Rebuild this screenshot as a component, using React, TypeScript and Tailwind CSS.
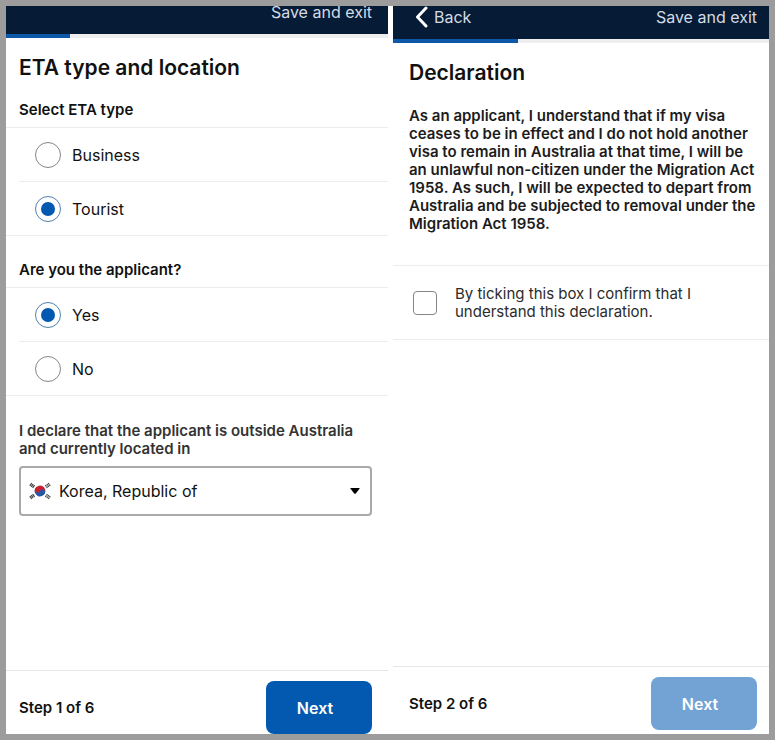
import { ReactNode, useState } from 'react';

interface ScreenProps {
  step: number;
  header: ReactNode;
  children: ReactNode;
  footerClass: string;
  nextDisabled?: boolean;
}

const TOTAL_STEPS = 6;

function Screen({ step, header, children, footerClass, nextDisabled = false }: ScreenProps) {
  return (
    <section className="flex min-w-0 flex-col bg-white">
      {header}
      <div className="h-1 bg-[#eeeef0]">
        <div className="h-full bg-[#0d58a8]" style={{ width: `${(step / TOTAL_STEPS) * 100}%` }} />
      </div>
      <main className="flex-1">{children}</main>
      <footer className={`flex items-center justify-between border-t border-[#e4e7e8] pt-2.5 ${footerClass}`}>
        <span className="text-[15px] leading-5 font-semibold">
          Step {step} of {TOTAL_STEPS}
        </span>
        <button
          type="button"
          disabled={nextDisabled}
          className="h-[53px] w-[106px] rounded-lg bg-[#0359b0] pr-2 text-base font-semibold text-white disabled:bg-[#73a2d4]"
        >
          Next
        </button>
      </footer>
    </section>
  );
}

interface RadioGroupProps {
  name: string;
  legend: string;
  options: string[];
  value: string;
  onChange: (value: string) => void;
}

function RadioGroup({ name, legend, options, value, onChange }: RadioGroupProps) {
  return (
    <fieldset>
      <legend className="px-[13px] pb-[7px] text-[15px] leading-5 font-semibold">{legend}</legend>
      <div className="border-y border-[#ececec]">
        {options.map((option, i) => (
          <div key={option} className="pl-[13px]">
            <label
              className={`flex items-center gap-[11px] pl-4 text-base ${i > 0 ? 'h-[54px] border-t border-[#ececec]' : 'h-[53px]'}`}
            >
              <input
                type="radio"
                name={name}
                checked={value === option}
                onChange={() => onChange(option)}
                className="grid size-[26px] appearance-none place-items-center rounded-full border border-[#858585] before:size-3.5 before:rounded-full checked:border-[#4f7fae] checked:before:bg-[#0359b0]"
              />
              {option}
            </label>
          </div>
        ))}
      </div>
    </fieldset>
  );
}

function KoreaFlag() {
  return (
    <svg viewBox="0 0 22 18" className="h-[18px] w-[22px] shrink-0" aria-hidden="true">
      <g transform="rotate(25 11 9)">
        <path d="M5.600 9a5.400 5.400 0 0 1 10.800 0z" fill="#c9202f" />
        <path d="M5.600 9a5.400 5.400 0 0 0 10.800 0z" fill="#2458a6" />
        <circle cx="8.3" cy="9" r="2.7" fill="#c9202f" />
        <circle cx="13.7" cy="9" r="2.7" fill="#2458a6" />
      </g>
      <g stroke="#444" strokeWidth="1.3">
        <path d="M.8 3.800l2-2.600M2.200 4.800l2-2.600M3.600 5.800l2-2.600" />
        <path d="M21.200 3.800l-2-2.600M19.800 4.800l-2-2.600M18.400 5.800l-2-2.600" strokeDasharray="1.4 .5" />
        <path d="M.8 14.200l2 2.600M2.200 13.200l2 2.600M3.600 12.200l2 2.600" />
        <path d="M21.200 14.200l-2 2.600M19.800 13.200l-2 2.600M18.400 12.200l-2 2.600" strokeDasharray="1.4 .5" />
      </g>
    </svg>
  );
}

export default function App() {
  const [etaType, setEtaType] = useState('Tourist');
  const [applicant, setApplicant] = useState('Yes');

  return (
    <div className="flex min-h-screen bg-[#9c9c9c] p-1.5 font-[Inter,sans-serif] text-[#111]">
      <div className="grid flex-1 grid-cols-[382fr_376fr] gap-[5px] bg-white">
        <Screen
          step={1}
          footerClass="pr-4 pl-[13px]"
          header={
            <header className="flex h-7 items-end justify-end overflow-hidden bg-[#061b36] px-4 pb-2.5">
              <button type="button" className="text-base leading-6 text-[#d5dbe3]">
                Save and exit
              </button>
            </header>
          }
        >
          <h1 className="px-[13px] pt-3.5 pb-4 text-[21px] leading-8 font-semibold">ETA type and location</h1>
          <RadioGroup
            name="eta-type"
            legend="Select ETA type"
            options={['Business', 'Tourist']}
            value={etaType}
            onChange={setEtaType}
          />
          <div className="h-6" />
          <RadioGroup
            name="applicant"
            legend="Are you the applicant?"
            options={['Yes', 'No']}
            value={applicant}
            onChange={setApplicant}
          />
          <div className="px-[13px] pt-[26px]">
            <label htmlFor="location" className="block text-[15px] leading-[18px] font-semibold text-[#333]">
              I declare that the applicant is outside Australia and currently located in
            </label>
            <div className="mt-2 mr-[3px] flex h-[50px] items-center gap-2 rounded border-2 border-[#a9a9a9] px-2">
              <KoreaFlag />
              <select id="location" className="min-w-0 flex-1 appearance-none bg-transparent text-base">
                <option>Korea, Republic of</option>
              </select>
              <svg viewBox="0 0 10 6" className="mr-0.5 h-1.5 w-2.5" aria-hidden="true">
                <path d="M.8 0h8.4q.8 0 .3.8L5.8 5.4q-.8.9-1.6 0L.5.8Q0 0 .8 0z" fill="#000" />
              </svg>
            </div>
          </div>
        </Screen>

        <Screen
          step={2}
          nextDisabled
          footerClass="pr-3 pb-1 pl-4"
          header={
            <header className="flex h-[33px] items-end justify-between bg-[#061b36] pr-3 pb-2.5 pl-[22px] text-base leading-6 text-[#d5dbe3]">
              <button type="button" className="flex items-center gap-1.5">
                <svg viewBox="0 0 13 22" className="h-[22px] w-[13px]" fill="none" aria-hidden="true">
                  <path d="M11 2L2.5 11L11 20" stroke="#fff" strokeWidth="3" strokeLinecap="round" strokeLinejoin="round" />
                </svg>
                Back
              </button>
              <button type="button">Save and exit</button>
            </header>
          }
        >
          <h1 className="px-4 pt-3.5 pb-[18px] text-[21px] leading-8 font-semibold">Declaration</h1>
          <p className="pr-2 pb-8 pl-4 text-[15px] leading-[18px] font-semibold text-[#1c1c1c]">
            As an applicant, I understand that if my visa ceases to be in effect and I do not hold another visa to
            remain in Australia at that time, I will be an unlawful non-citizen under the Migration Act 1958. As such,
            I will be expected to depart from Australia and be subjected to removal under the Migration Act 1958.
          </p>
          <label className="flex h-[75px] items-center gap-[18px] border-y border-[#ececec] pr-16 pl-5 text-[15px] leading-[18px] text-[#2b2b2b]">
            <input
              type="checkbox"
              className="size-6 shrink-0 appearance-none rounded-sm border border-[#858585] checked:bg-[#0359b0]"
            />
            By ticking this box I confirm that I understand this declaration.
          </label>
        </Screen>
      </div>
    </div>
  );
}
